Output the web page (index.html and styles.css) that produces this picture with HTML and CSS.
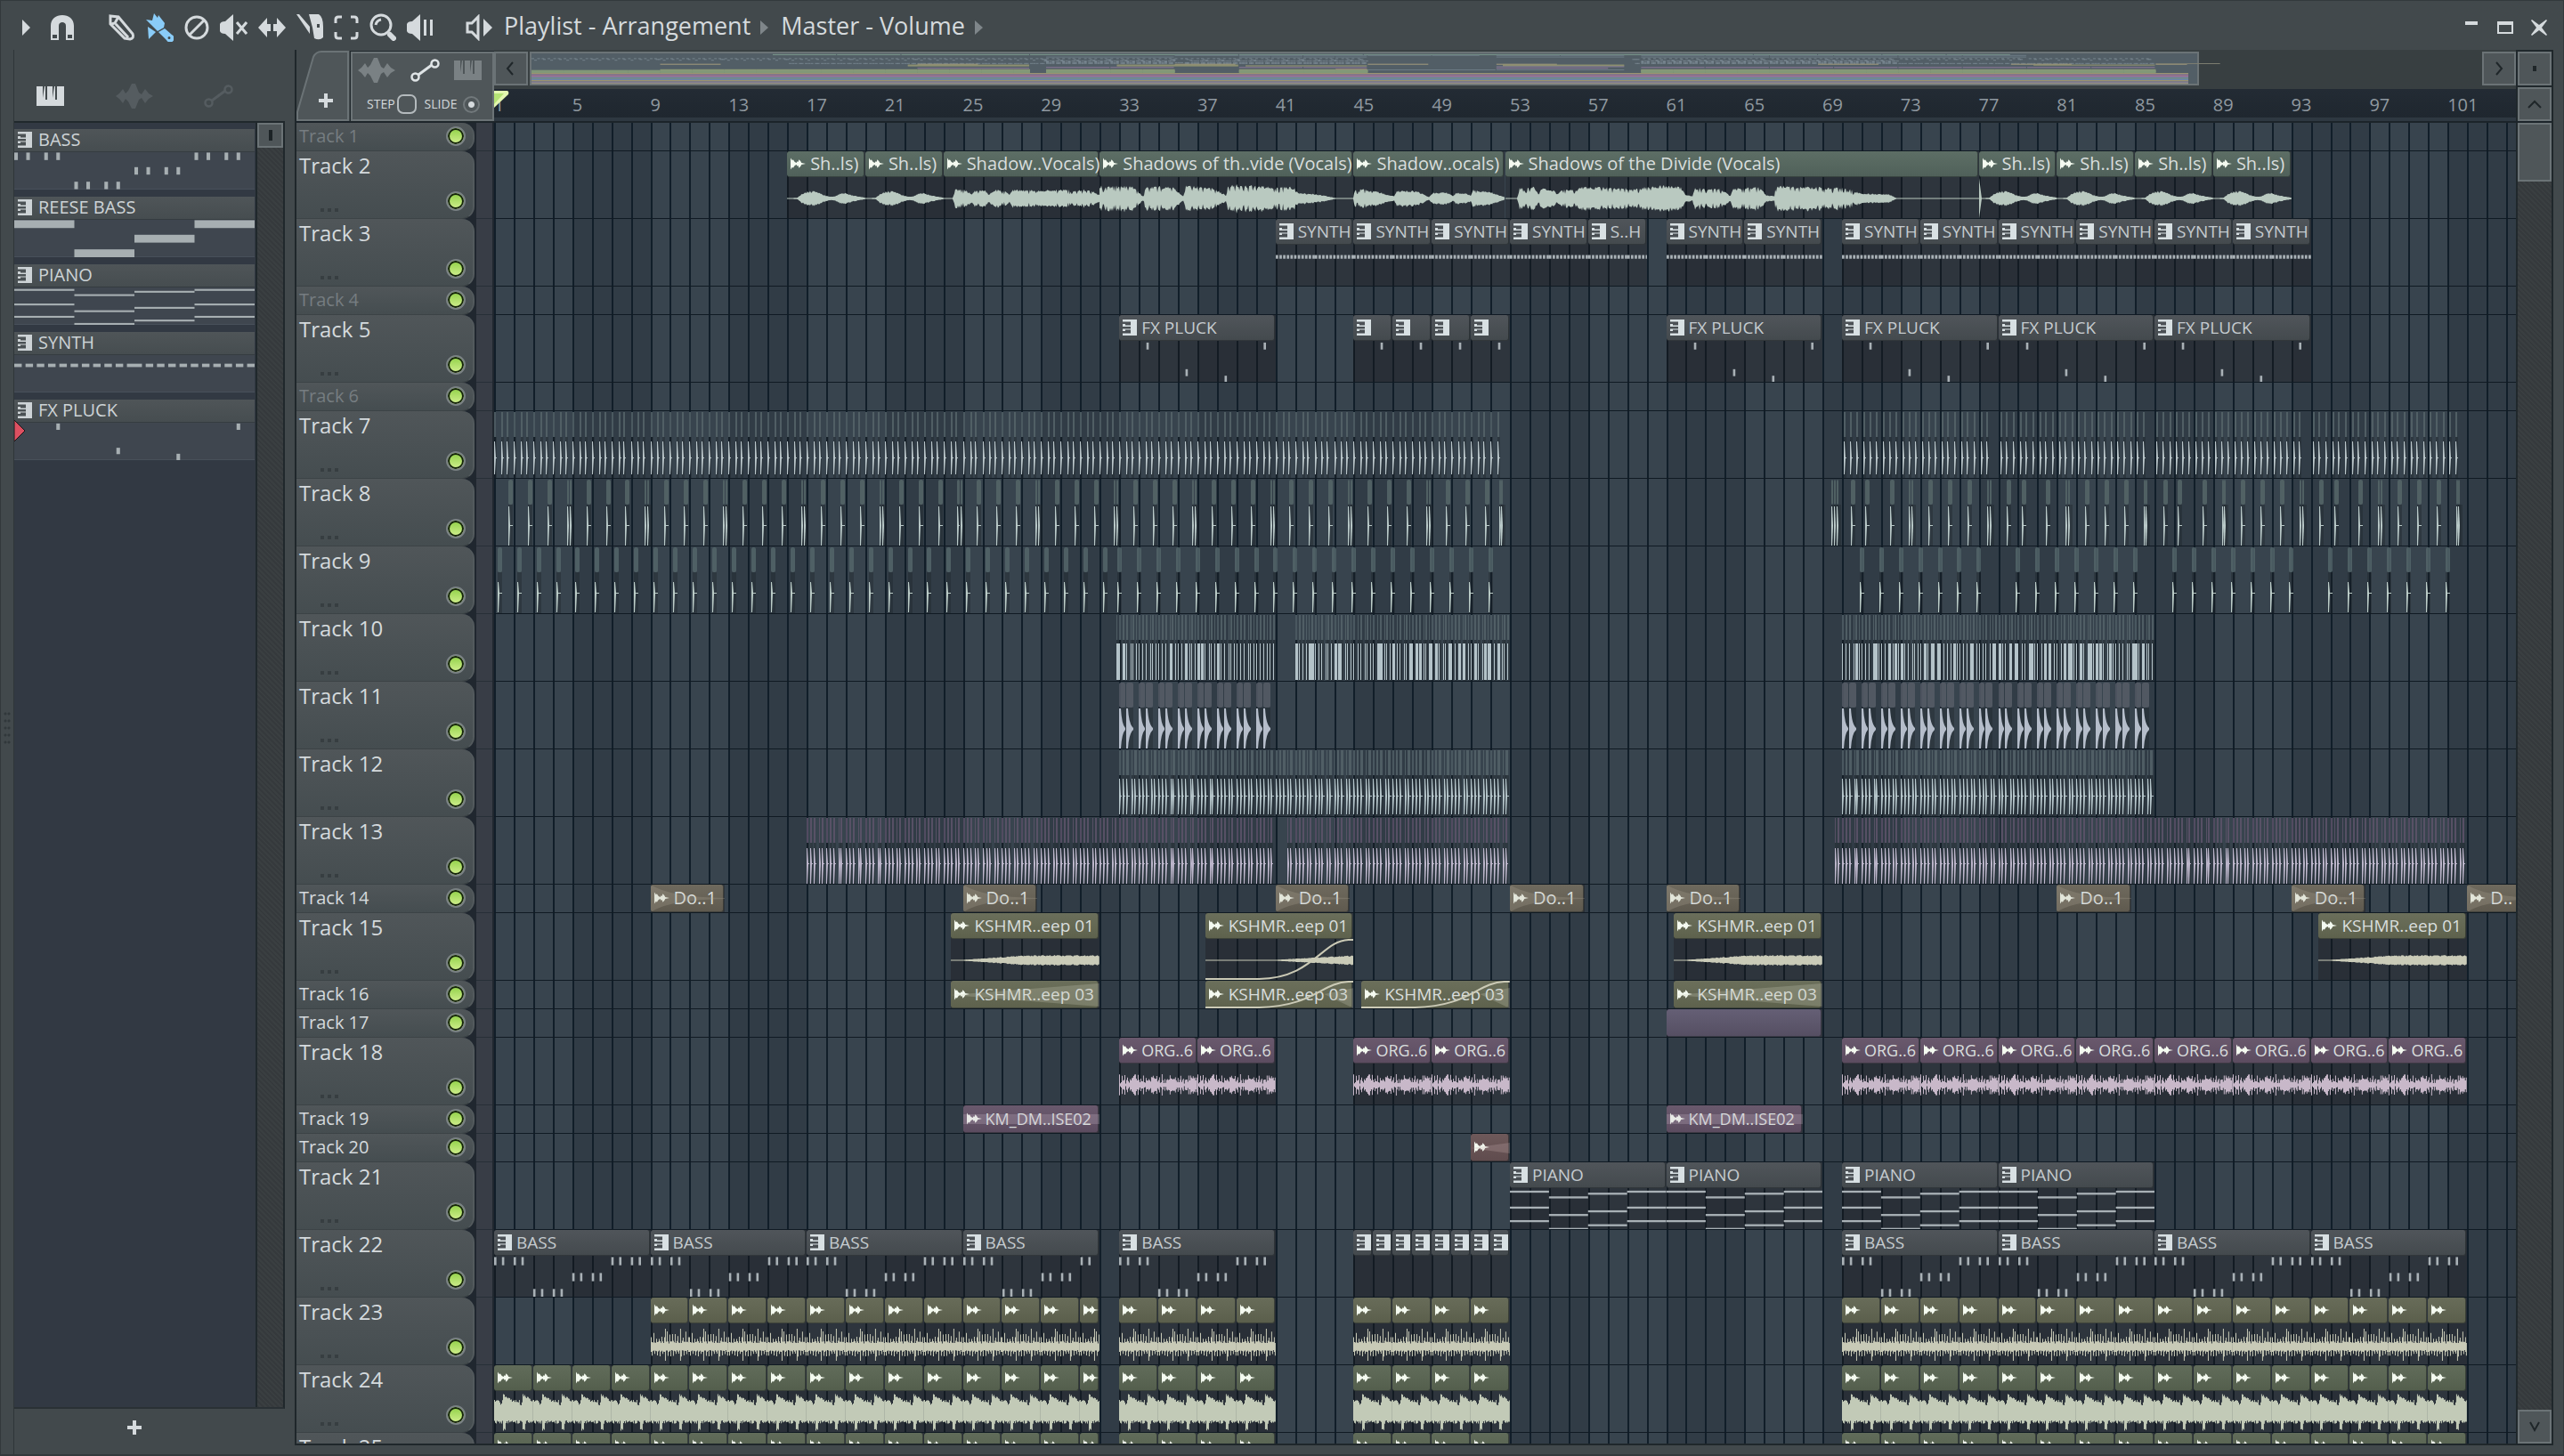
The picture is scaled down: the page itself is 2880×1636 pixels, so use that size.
FILE: index.html
```html
<!DOCTYPE html>
<html lang="en">
  <head>
    <meta charset="UTF-8" />
    <meta name="viewport" content="width=device-width, initial-scale=1.0" />
    <title>Playlist - Arrangement</title>
    <link rel="stylesheet" href="styles.css" />
  </head>
  <body>
    <svg class="symbols" aria-hidden="true">
      <symbol id="keys" viewBox="0 0 16 18">
        <path d="M0 0H16V18H0V15.5H9V11.5H3V13H0V10.5H9V8H0V5H3V6.5H9V2.5H0Z" fill="currentColor" />
      </symbol>
      <symbol id="audio" viewBox="0 0 18 14">
        <path d="M0 0L2 3L3 2L5 5L7 6L8 4L9 5L10 2L12 4L13 6L18 7L13 8L12 10L10 12L9 9L8 10L7 8L5 9L3 12L2 11L0 14Z" fill="currentColor" />
      </symbol>
      <symbol id="piano" viewBox="0 0 31 22">
        <path d="M0 0H7V13L9 0H10V15H12V0H18V13L20 0H21V15H23V0H31V22H0Z" fill="currentColor" />
      </symbol>
      <symbol id="wave" viewBox="0 0 42 28">
        <path d="M0 14L4 11L8 6L11 11L14 8L18 0H22L26 10L29 12L33 6L37 11L42 14L37 17L33 22L29 16L26 18L22 28H18L14 20L11 17L8 22L4 17Z" fill="currentColor" />
      </symbol>
      <symbol id="auto" viewBox="0 0 33 26">
        <path d="M9 18L24 7" stroke="currentColor" stroke-width="3" />
        <circle cx="5.500" cy="20.500" r="4" fill="none" stroke="currentColor" stroke-width="2.500" />
        <circle cx="27.500" cy="5.500" r="4" fill="none" stroke="currentColor" stroke-width="2.500" />
      </symbol>
    </svg>

    <header class="titlebar">
      <nav class="tools">
        <button class="tool menu" aria-label="Menu"><svg width="9" height="18"><path d="M0 0L9 9L0 18Z" /></svg></button>
        <button class="tool snap" aria-label="Snap"><svg width="28" height="28"><path d="M1 28V12C1 4 7 0 14 0S27 4 27 12V28H18V12C18 9 16 8 14 8S10 9 10 12V28ZM3 22V26H8V22ZM20 22V26H25V22Z" fill-rule="evenodd" /></svg></button>
        <button class="tool" aria-label="Draw"><svg width="30" height="30" viewBox="0 0 30 30" class="line"><path d="M2 2L11 3L27 22Q29 27 24 28L18 27L2 11Z" /><path d="M3 11L7 10L11 3M8 11L22 26" /></svg></button>
        <button class="tool on" aria-label="Paint"><svg width="31" height="32" viewBox="0 0 31 32"><path d="M9 0L13 5L14 2L21 11L20 16L13 20L6 13L0 7L7 8Z" /><path d="M14 21L21 17L29 24A4.500 4.500 0 1 1 23 30ZM26 26A1.500 1.500 0 1 0 26 29A1.500 1.500 0 1 0 26 26Z" fill-rule="evenodd" /><path d="M2 15L11 21L3 29Z" /></svg></button>
        <button class="tool" aria-label="Delete"><svg width="28" height="28" viewBox="0 0 28 28" class="line"><circle cx="14" cy="14" r="12" /><path d="M6 22L22 6" /></svg></button>
        <button class="tool" aria-label="Mute"><svg width="31" height="30" viewBox="0 0 31 30"><path d="M0 11Q1 8 6 8L15 0V30L6 22Q1 22 0 19Z" /><path d="M19 9L30 22M30 9L19 22" class="stroke" /></svg></button>
        <button class="tool" aria-label="Slip"><svg width="31" height="24" viewBox="0 0 31 24"><path d="M0 12L10 1V8H14V16H10V23ZM31 12L21 1V8H17V16H21V23Z" /></svg></button>
        <button class="tool" aria-label="Slice"><svg width="30" height="29" viewBox="0 0 30 29"><path d="M0 0H3L15 14V22Z" /><path d="M14 0H25Q30 3 30 14V26Q26 30 20 27L18 15ZM23 11V15H26V11Z" fill-rule="evenodd" /></svg></button>
        <button class="tool" aria-label="Select"><svg width="28" height="28" viewBox="0 0 28 28" class="line"><path d="M2 9V5Q2 2 5 2H9M19 2H23Q26 2 26 5V9M26 19V23Q26 26 23 26H19M9 26H5Q2 26 2 23V19" /></svg></button>
        <button class="tool" aria-label="Zoom"><svg width="30" height="31" viewBox="0 0 30 31" class="line"><circle cx="13" cy="13" r="11" /><path d="M7 13Q8 8 13 7" /><path d="M23 24L27 28" class="thick" /></svg></button>
        <button class="tool" aria-label="Preview"><svg width="30" height="30" viewBox="0 0 30 30"><path d="M0 11Q1 8 6 8L15 0V30L6 22Q1 22 0 19Z" /><path d="M19 6H22V24H19ZM26 6H29V24H26Z" /></svg></button>
        <button class="tool scrub" aria-label="Playback"><svg width="30" height="30" viewBox="0 0 30 30"><path d="M2 10H7L14 3V27L7 20H2Z" class="stroke" /><path d="M20 5L30 15L20 25Z" /></svg></button>
      </nav>
      <h1 class="crumb">Playlist - Arrangement</h1>
      <svg class="sep" width="9" height="16"><path d="M0 0L9 8L0 16Z" /></svg>
      <h2 class="crumb">Master - Volume</h2>
      <svg class="sep" width="9" height="16"><path d="M0 0L9 8L0 16Z" /></svg>
      <div class="window-buttons">
        <button aria-label="Minimize"><svg width="20" height="20"><path d="M3 3H17V7H3Z" /></svg></button>
        <button aria-label="Maximize"><svg width="20" height="20"><path d="M1 3H19V17H1ZM3 7V15H17V7Z" fill-rule="evenodd" /></svg></button>
        <button aria-label="Close"><svg width="20" height="20"><path d="M2 1L10 7L18 1L19 2L13 10L19 18L18 19L10 13L2 19L1 18L7 10L1 2Z" /></svg></button>
      </div>
    </header>

    <main class="workspace">
      <div class="edge"><div class="grip"></div></div>
      <aside class="picker">
        <div class="picker-tabs">
          <button class="active" aria-label="Patterns"><svg width="31" height="22"><use href="#piano" /></svg></button>
          <button aria-label="Audio"><svg width="42" height="28"><use href="#wave" /></svg></button>
          <button aria-label="Automation"><svg width="33" height="26"><use href="#auto" /></svg></button>
        </div>
        <div class="picker-body">
          <div class="patterns" id="patterns"></div>
          <div class="picker-scroll"><button class="thumb" aria-label="Scroll"></button></div>
        </div>
        <button class="add-pattern" aria-label="Add pattern"><svg width="16" height="16"><path d="M6 0H10V6H16V10H10V16H6V10H0V6H6Z" /></svg></button>
      </aside>

      <section class="playlist">
        <div class="top">
          <div class="corner">
            <button class="add-track" aria-label="Add track">
              <svg width="59" height="80"><path class="tab" d="M1 79L1 70L19 8Q22 2 28 2H58V79Z" /><path class="plus" d="M31 49H35V55H41V59H35V65H31V59H25V55H31Z" /></svg>
            </button>
            <div class="options">
              <div class="modes">
                <button aria-label="Audio clips"><svg width="42" height="28"><use href="#wave" /></svg></button>
                <button class="active" aria-label="Automation clips"><svg width="33" height="26"><use href="#auto" /></svg></button>
                <button aria-label="Pattern clips"><svg width="31" height="22"><use href="#piano" /></svg></button>
              </div>
              <div class="switches">
                <label for="step">STEP</label><input type="checkbox" id="step" />
                <label for="slide">SLIDE</label><input type="radio" id="slide" checked />
              </div>
            </div>
          </div>
          <div class="time">
            <div class="map-row">
              <button class="box" aria-label="Scroll left"><svg width="12" height="18"><path d="M8 2L2 9L8 16" /></svg></button>
              <div class="map"><svg id="map"></svg></div>
              <button class="box" aria-label="Scroll right"><svg width="12" height="18"><path d="M3 2L9 9L3 16" /></svg></button>
            </div>
            <div class="ruler" id="ruler">
              <svg class="playhead" width="17" height="20"><path d="M0 0H15Q17 1 16 4L0 19Z" /><path d="M0 3H11L0 15Z" class="inner" /></svg>
            </div>
          </div>
          <div class="stack">
            <button class="box" aria-label="Options"><svg width="4" height="6"><path d="M2 0V6" class="dot" /></svg></button>
            <button class="box" aria-label="Scroll up"><svg width="18" height="12"><path d="M2 10L9 3L16 10" /></svg></button>
          </div>
        </div>
        <div class="bottom">
          <div class="tracks" id="tracks"><svg class="grid" id="grid"></svg></div>
          <div class="scroll">
            <button class="box thumb" aria-label="Scroll position"></button>
            <button class="box down" aria-label="Scroll down"><svg width="18" height="14"><path d="M4 2L9 11L14 2" /></svg></button>
          </div>
        </div>
      </section>
    </main>
    <script src="playlist.js"></script>
  </body>
</html>
```
FILE: styles.css
```css
* {
  margin: 0;
  padding: 0;
  box-sizing: border-box;
}

body {
  height: 100vh;
  overflow: hidden;
  display: flex;
  flex-direction: column;
  background: #42494c;
  border: 1px solid #33393c;
  border-bottom-width: 2px;
  color: #d5dadd;
  font-family: 'Open Sans', 'Noto Sans', sans-serif;
}

button {
  border: 0;
  background: none;
  color: inherit;
  font: inherit;
  cursor: pointer;
}

svg {
  display: block;
  fill: currentColor;
}

.symbols {
  position: absolute;
  width: 0;
  height: 0;
}

/* title bar */
.titlebar {
  flex: none;
  height: 55px;
  display: flex;
  align-items: center;
  padding: 4px 17px 0 24px;
}

.tools {
  display: flex;
  align-items: center;
  gap: 12px;
}

.tool .line,
.tool .stroke {
  fill: none;
  stroke: currentColor;
  stroke-width: 3;
}

.tool .thick {
  stroke-width: 6;
  stroke-linecap: round;
}

.tool.menu {
  margin-right: 10px;
}

.tool.snap {
  margin-right: 26px;
}

.tool.on {
  color: #8accf8;
}

.tool.scrub {
  margin: 0 13px 0 24px;
}

.crumb {
  font-size: 27px;
  font-weight: 400;
  line-height: 32px;
  padding-bottom: 4px;
  white-space: nowrap;
}

.sep {
  margin: 0 14px 0 11px;
  color: #7f868a;
}

.window-buttons {
  margin-left: auto;
  display: flex;
  gap: 18px;
}

/* main areas */
.workspace {
  flex: 1;
  min-height: 0;
  display: flex;
  padding-right: 11px;
}

.edge {
  flex: none;
  width: 15px;
  display: flex;
  align-items: center;
  justify-content: center;
  border-right: 1px solid #2f3639;
}

.grip {
  width: 8px;
  height: 40px;
  margin-bottom: 54px;
  background: radial-gradient(circle, #31383b 1px, transparent 2px) 0 0 / 4px 8px;
}

.picker {
  flex: none;
  width: 304px;
  display: flex;
  flex-direction: column;
}

.picker-tabs {
  height: 80px;
  display: flex;
  align-items: center;
  justify-content: space-between;
  padding: 24px 58px 0 25px;
  color: #555c60;
}

.picker-tabs .active {
  color: #d5dadd;
}

.picker-body {
  flex: 1;
  min-height: 0;
  display: flex;
  border-top: 2px solid #20282c;
  border-right: 2px solid #20282c;
  border-bottom: 2px solid #2a3135;
}

.patterns {
  flex: 1;
  background: #323943;
  padding-top: 7px;
}

.pattern {
  height: 68px;
  margin: 0 1px 8px 0;
}

.pattern-name {
  height: 26px;
  display: flex;
  align-items: center;
  gap: 7px;
  padding: 0 0 2px 4px;
  background: linear-gradient(#4f5558, #464d50);
  border-bottom: 1px solid #353c40;
  font-size: 20px;
  line-height: 22px;
  color: #cdd3d6;
}

.pattern-notes {
  height: 42px;
  background: #3f464f;
  border-bottom: 1px solid #48505a;
}

.pattern-notes svg {
  width: 100%;
  height: 42px;
  fill: #a7afb2;
}

.pattern.current {
  position: relative;
}

.marker {
  position: absolute;
  left: 0;
  top: 22px;
  fill: #dd5061;
  stroke: #1c1416;
}

.picker-scroll {
  width: 31px;
  border-left: 2px solid #20282c;
  background: repeating-linear-gradient(45deg, #35393c 0 2px, #3a3f41 2px 4px);
}

.picker-scroll .thumb {
  display: block;
  width: 29px;
  height: 28px;
  border: 2px solid #6b7376;
  background: linear-gradient(#1c2326, #1c2326) center / 4px 12px no-repeat #4f5659;
}

.add-pattern {
  height: 51px;
  padding: 0 145px 9px 127px;
}

/* playlist */
.playlist {
  flex: 1;
  min-width: 0;
  margin: 0 0 10px 11px;
  border: 2px solid #1f272b;
  border-top: 0;
  display: flex;
  flex-direction: column;
}

.top {
  flex: none;
  height: 82px;
  display: flex;
  border-bottom: 2px solid #1c242a;
}

.corner {
  flex: none;
  width: 222px;
  display: flex;
  gap: 2px;
  background: #42494c;
}

.corner .tab {
  fill: #4f5659;
  stroke: #6b7376;
  stroke-width: 2;
}

.options {
  flex: 1;
  margin-top: 2px;
  border: 2px solid #6b7376;
  outline: 1px solid #20282c;
  background: #4f5659;
}

.modes {
  height: 38px;
  display: flex;
  align-items: center;
  justify-content: space-between;
  padding: 0 12px 0 6px;
  color: #7a8184;
}

.modes .active {
  color: #dfe4e6;
}

.switches {
  height: 38px;
  display: flex;
  align-items: center;
  padding: 0 10px 0 16px;
  font-size: 14px;
  line-height: 20px;
}

.switches input {
  appearance: none;
  flex: none;
  width: 22px;
  height: 22px;
  margin: 0 9px 0 2px;
  border: 2px solid #b4babd;
  border-radius: 7px;
}

.switches input[type='radio'] {
  width: 19px;
  height: 19px;
  margin: 0 0 0 7px;
  border-color: #71787b;
  border-radius: 50%;
  background: radial-gradient(circle, #d5dadd 3px, transparent 4px);
}

.time {
  flex: 1;
  min-width: 0;
}

.map-row {
  height: 44px;
  display: flex;
  padding: 2px 0 4px;
  background: #383f41;
}

.box {
  flex: none;
  width: 38px;
  height: 38px;
  display: flex;
  align-items: center;
  justify-content: center;
  border: 2px solid #6b7376;
  background: #4f5659;
}

.box path {
  fill: none;
  stroke: #1f2629;
  stroke-width: 2;
}

.box .dot {
  stroke-width: 4;
}

.map {
  flex: 1;
  min-width: 0;
  margin: 0 2px;
}

.map svg {
  width: 100%;
  height: 38px;
}

.ruler {
  position: relative;
  height: 36px;
  display: flex;
  overflow: hidden;
  border-bottom: 4px solid #2e3841;
  background: linear-gradient(#232b34, #1f272f);
  font-size: 20px;
  line-height: 36px;
  color: #9099a0;
}

.ruler span {
  flex: none;
  width: calc(400% / 103.5);
}

.playhead {
  position: absolute;
  left: 0;
  top: 2px;
  fill: #e3f7b0;
}

.playhead .inner {
  fill: #b5e375;
}

.stack {
  flex: none;
  width: 40px;
  display: flex;
  flex-direction: column;
  gap: 2px;
  padding-top: 2px;
  border-left: 2px solid #20282c;
  background: #20282c;
}

.bottom {
  flex: 1;
  min-height: 0;
  display: flex;
}

.tracks {
  position: relative;
  flex: 1;
  min-width: 0;
  overflow: hidden;
  background: #20272f;
}

.grid {
  position: absolute;
  left: 222px;
  top: 0;
  width: calc(100% - 222px);
  height: 100%;
}

.track {
  height: 76px;
  display: flex;
}

.track.short {
  height: 32px;
}

.head {
  flex: none;
  width: 200px;
  display: flex;
  justify-content: space-between;
  padding-left: 3px;
  border-radius: 0 14px 14px 0;
  border-right: 2px solid #535a5d;
  border-bottom: 1px solid #3c4346;
  background: linear-gradient(#505659, #454d50);
}

.name {
  font-size: 24px;
  font-weight: 400;
  line-height: 32px;
}

.short .name {
  font-size: 20px;
  line-height: 30px;
}

.empty .name {
  color: #767d81;
}

.more {
  width: 20px;
  height: 4px;
  margin: 32px 0 0 24px;
  background: repeating-linear-gradient(90deg, #373e41 0 4px, transparent 4px 8px);
}

.short .more {
  display: none;
}

.led {
  align-self: flex-end;
  width: 22px;
  height: 22px;
  margin: 0 8px 8px 0;
  border: 2px solid #7a8184;
  border-radius: 50%;
  background: linear-gradient(#8fd046, #d3f090);
  box-shadow: inset 0 0 0 2px #16240c;
}

.short .led {
  margin-bottom: 5px;
}

.gutter {
  flex: none;
  width: 18px;
  margin: 0 2px;
  background: #383d46;
  border-bottom: 1px solid #272f37;
}

.lane {
  position: relative;
  flex: 1;
  min-width: 0;
  overflow: hidden;
  border-bottom: 1px solid #101a23;
}

.hits {
  position: absolute;
  left: 0;
  top: 0;
  width: 100%;
  height: 76px;
}

.clip {
  --top: #50555a;
  --low: #444a4e;
  --ink: #a9b1b6;
  position: absolute;
  top: 0;
  height: 100%;
  background: rgba(26, 22, 26, 0.32);
  overflow: hidden;
}

.clip-name {
  position: relative;
  height: 29px;
  display: flex;
  align-items: center;
  gap: 5px;
  margin-right: 1px;
  padding-left: 4px;
  border-radius: 3px;
  border: 1px solid rgba(20, 26, 28, 0.5);
  border-width: 0 1px 1px 0;
  background: linear-gradient(var(--top), var(--low));
  color: #d9dedd;
  font-size: 20px;
  line-height: 28px;
  white-space: nowrap;
}

.clip-name svg {
  flex: none;
  color: #f4faf0;
}

.clip.pattern-clip .clip-name svg {
  color: #d8e0e3;
}

.clip.pattern-clip .clip-name {
  color: #c5cbcf;
  font-size: 19px;
}

.clip.sweep .clip-name {
  font-size: 19px;
}

.clip.organ .clip-name {
  font-size: 18px;
  gap: 4px;
}

.short .clip-name {
  height: 31px;
}

.clip-body {
  position: absolute;
  left: 0;
  top: 30px;
  width: 100%;
  height: 46px;
  fill: var(--ink);
}

.short .clip-body {
  top: 0;
  height: 31px;
  opacity: 0.25;
}

.curve {
  position: absolute;
  left: 0;
  bottom: 0;
  width: 100%;
  fill: none;
  stroke: #cbcab6;
  stroke-width: 2;
}

.vocals { --top: #5d6e65; --low: #50615a; --ink: #b9c9c0; }
.crash { --top: #6f6a5e; --low: #5f5a4f; --ink: #b0a898; }
.sweep { --top: #6b6f5b; --low: #5e624d; --ink: #cacbb8; }
.block { --top: #655f75; --low: #564f63; --ink: #c8b8c9; }
.organ { --top: #6a596d; --low: #5c4c60; --ink: #c8b8c9; }
.impact { --top: #6e595a; --low: #604c4e; --ink: #c9b0b0; }
.gold { --top: #686c59; --low: #5b5f4c; --ink: #c8cab7; }
.green { --top: #616c5a; --low: #545f4d; --ink: #c2cab7; }

.scroll {
  flex: none;
  width: 40px;
  display: flex;
  flex-direction: column;
  justify-content: space-between;
  border-left: 2px solid #20282c;
  background: repeating-linear-gradient(45deg, #35393c 0 2px, #3a3f41 2px 4px);
}

.scroll .thumb {
  height: 66px;
}
```
FILE: playlist.js
```javascript
const BARS = 103.5;
const tracksEl = document.querySelector('#tracks');
const grid = document.querySelector('#grid');
const ruler = document.querySelector('#ruler');
const patterns = document.querySelector('#patterns');

// notes as [start bar, top %, length, height %] in a pattern of the given length
const quad = (bar, y) => [0, 0.4, 1, 1.4].map((o) => [bar + o, y, 0.12, 20]);
const steps = (rows, h) => rows.flatMap((r, i) => r.map((y) => [i * 2, y, 2, h]));
const dashes = [];
for (let half = 0; half < 2; half++) {
  for (let i = 0; i < 11; i++) {
    dashes.push([half * 2 + i * 0.1875, 23, Math.min(0.125, 2 - i * 0.1875), 9]);
  }
}
const notes = {
  BASS: { length: 8, list: [...quad(0, 1), ...quad(2, 79), ...quad(4, 40), ...quad(6, 1)] },
  'REESE BASS': { length: 8, list: steps([[1], [79], [40], [1]], 21) },
  PIANO: { length: 8, list: steps([[4, 43, 76], [18, 61, 95], [9, 52, 86], [4, 43, 76]], 5) },
  SYNTH: { length: 4, list: dashes },
  'FX PLUCK': { length: 8, list: [[1.4, 2, 0.12, 17], [3.4, 67, 0.12, 17], [5.4, 83, 0.12, 17], [7.4, 2, 0.12, 17]] },
};

// half heights of the vocal takes, as [position, height]
const phrase = [[0, 0], [0.13, 0.3], [0.2, 5], [0.28, 8], [0.38, 7], [0.48, 3], [0.56, 1.5], [0.62, 2], [0.66, 4], [0.72, 6], [0.8, 4], [0.9, 2], [1, 0.5]];
const takes = {
  16: phrase,
  20: phrase,
  24: [[0, 0], [0.06, 0], [0.07, 10], [0.14, 9], [0.18, 4], [0.2, 8], [0.26, 9], [0.29, 4], [0.33, 9], [0.39, 8], [0.42, 4], [0.44, 9], [0.94, 9], [1, 3]],
  32: [[0, 13], [0.13, 13], [0.17, 2], [0.175, 2], [0.18, 13], [0.29, 12], [0.33, 2], [0.34, 13], [0.44, 12], [0.5, 3], [0.505, 15], [0.7, 12], [0.77, 12], [0.78, 6], [0.86, 4], [0.93, 0], [1, 0]],
  45: [[0, 0], [0.01, 10], [0.12, 9], [0.22, 4], [0.27, 2], [0.29, 8], [0.42, 8], [0.5, 1], [0.53, 6], [0.62, 6], [0.66, 2], [0.68, 6], [0.74, 5], [0.78, 3], [0.79, 9], [0.9, 7], [1, 1]],
  52.75: [[0, 0], [0.025, 0], [0.03, 11], [0.06, 12], [0.07, 4], [0.075, 11], [0.1, 9], [0.11, 4], [0.12, 10], [0.15, 9], [0.16, 12], [0.29, 11], [0.3, 14], [0.37, 12], [0.38, 4], [0.395, 2], [0.4, 11], [0.455, 10], [0.475, 2], [0.48, 11], [0.54, 12], [0.55, 3], [0.568, 2], [0.57, 13], [0.72, 11], [0.75, 5], [0.81, 4], [0.825, 0], [1, 0]],
  77: phrase,
  81: phrase,
  85: phrase,
  89: phrase,
};

const run = (from, to, step, name) => {
  const list = [];
  for (let b = from; b < to; b += step) list.push([b, Math.min(b + step, to), name]);
  return list;
};
const beats = (offsets, ...ranges) =>
  ranges.flatMap(([from, to]) => {
    const list = [];
    for (let b = Math.floor(from); b < to; b++) {
      offsets.forEach((o) => { if (b + o >= from && b + o < to) list.push(b + o); });
    }
    return list;
  });
const phrases = (fn) => [70, 78, 86, 94].flatMap(fn);
const kick = (a, b) => {
  const list = [];
  for (let n = a; n < b; n++) {
    list.push(n + 0.72);
    if ((n - a) % 4 === 3) list.push(n + 0.86);
  }
  return list;
};
const loops = (from) => [...run(from, 32, 2), ...run(33, 41, 2), ...run(45, 53, 2), ...run(70, 102, 2)];
const five = [0, 0.18, 0.36, 0.62, 0.75];

const tracks = [
  { short: true },
  { kind: 'vocals', clips: [[16, 20, 'Sh..ls)'], [20, 24, 'Sh..ls)'], [24, 32, 'Shadow..Vocals)'], [32, 45, 'Shadows of th..vide (Vocals)'], [45, 52.75, 'Shadow..ocals)'], [52.75, 77, 'Shadows of the Divide (Vocals)'], ...run(77, 93, 4, 'Sh..ls)')] },
  { pattern: 'SYNTH', clips: [...run(41, 57, 4, 'SYNTH'), [57, 60, 'S..H'], ...run(61, 69, 4, 'SYNTH'), ...run(70, 94, 4, 'SYNTH')] },
  { short: true },
  { pattern: 'FX PLUCK', clips: [[33, 41, 'FX PLUCK'], ...run(45, 53, 2), [61, 69, 'FX PLUCK'], ...run(70, 94, 8, 'FX PLUCK')] },
  { short: true },
  { hits: [...beats([0, 0.36, 0.63], [1, 41], [41, 52.5]), ...phrases((p) => beats([0.1, 0.4, 0.75], [p, p + 7.45]))], w: 3, tip: 34, low: 71, wave: '#b9c5c9', strip: '#56646a' },
  { hits: [...kick(1, 33), ...kick(33, 41), ...kick(41, 52), 52.44, 52.56, 69.45, 69.59, 69.73, ...phrases((p) => [0.44, 1.2, 2.44, 3.44, 3.56, 4.44, 5.44, 6.44, 7.44, 7.56].map((o) => p + o))], w: 5, tip: 31, low: 75, wave: '#b9c9c8', strip: '#566668' },
  { hits: [...beats([0.17], [1, 33]), ...beats([0.9], [32, 52]), ...phrases((p) => beats([0.9], [p, p + 7]))], w: 5, tip: 40, low: 74, wave: '#bccdc8', strip: '#54656a' },
  { hits: beats([0, 0.19, 0.36, 0.58, 0.68, 0.86], [32.7, 41], [42, 53], [70, 86]), w: 3, tip: 33, low: 74, wave: '#b4c3c9', strip: '#55636a', solid: true },
  { hits: beats([0, 0.36], [33, 41], [70, 86]), w: 8, tip: 30, low: 75, wave: '#b5bdca', strip: '#575d67', fat: true },
  { hits: beats(five, [33, 53], [70, 86]), w: 4, tip: 33, low: 73, wave: '#b6c6cb', strip: '#55636a' },
  { hits: beats(five, [17, 41], [41.6, 53], [69.45, 102]), w: 3, tip: 35, low: 75, wave: '#bdb6cb', strip: '#5e536b' },
  { short: true, kind: 'crash', clips: [9, 25, 41, 53, 61, 81, 93].map((b) => [b, b + 3.82, 'Do..1']).concat([[102, 105.8, 'D..']]) },
  { kind: 'sweep', clips: [[24.4, 32, 'KSHMR..eep 01'], [37.4, 45, 'KSHMR..eep 01', 'curve'], [61.4, 69, 'KSHMR..eep 01'], [94.4, 102, 'KSHMR..eep 01']] },
  { short: true, kind: 'sweep', clips: [[24.4, 32, 'KSHMR..eep 03'], [37.4, 45, 'KSHMR..eep 03', 'curve'], [45.4, 53, 'KSHMR..eep 03', 'curve'], [61.4, 69, 'KSHMR..eep 03']] },
  { short: true, kind: 'block', clips: [[61, 69]] },
  { kind: 'organ', clips: [...run(33, 41, 4, 'ORG..6'), ...run(45, 53, 4, 'ORG..6'), ...run(70, 102, 4, 'ORG..6')] },
  { short: true, kind: 'organ', clips: [[25, 32, 'KM_DM..ISE02'], [61, 68, 'KM_DM..ISE02']] },
  { short: true, kind: 'impact', clips: [[51, 53, '']] },
  { pattern: 'PIANO', clips: [[53, 61, 'PIANO'], [61, 69, 'PIANO'], [70, 78, 'PIANO'], [78, 86, 'PIANO']] },
  { pattern: 'BASS', clips: [...run(1, 32, 8, 'BASS'), [33, 41, 'BASS'], ...run(45, 53, 1), ...run(70, 102, 8, 'BASS')] },
  { kind: 'gold', clips: loops(9) },
  { kind: 'green', clips: loops(1) },
  { kind: 'green', clips: loops(1) },
];

let seed = 7;
const rand = () => {
  seed = (seed * 16807) % 2147483647;
  return seed / 2147483647;
};

const level = (points, t) => {
  for (let i = 1; i < points.length; i++) {
    const [t0, a0] = points[i - 1];
    const [t1, a1] = points[i];
    if (t <= t1) return a0 + ((a1 - a0) * (t - t0)) / (t1 - t0 || 1);
  }
  return 0;
};

const noteRects = (pattern, from, to) =>
  notes[pattern].list
    .filter(([b]) => b >= from && b < to)
    .map(([b, y, w, h]) => `<rect x="${b}" y="${y}" width="${w}" height="${h}"/>`)
    .join('');

// outline with an upper and a lower half height for each pixel column
const outline = (width, mid, heights) => {
  let up = `M0 ${mid}`;
  let down = '';
  for (let x = 0; x <= width; x++) {
    const [a, b] = heights(x);
    up += `L${x} ${(mid - a - 0.5).toFixed(1)}`;
    down = `L${x} ${(mid + b + 0.5).toFixed(1)}${down}`;
  }
  return `<path d="${up}${down}Z"/>`;
};

// one separate stroke for each pixel column, for sharp transients
const columns = (width, mid, heights) => {
  let d = '';
  for (let x = 0; x < width; x++) {
    const [a, b] = heights(x);
    d += `M${x} ${(mid - a).toFixed(1)}h1V${(mid + b).toFixed(1)}h-1Z`;
  }
  return `<path d="${d}"/>`;
};

const waveform = (track, clip, width) => {
  const [start, , , curve] = clip;
  seed = track.kind.length * 131 + 7;
  for (let i = 0; i < 5; i++) rand();
  if (track.kind === 'vocals') {
    const edge = start === 77 ? '<path d="M0 0L3 23L0 46Z"/>' : '';
    return edge + outline(width, 23, (x) => {
      const full = level(takes[start], x / width);
      const dip = full > 8 && rand() < 0.12 ? 0.6 : 1;
      const a = full * dip * (0.78 + rand() * 0.3);
      return [a, a * (0.9 + rand() * 0.2)];
    });
  }
  if (track.kind === 'crash') return `<path d="M0 0Q20 14 ${width} 15V16Q20 17 0 31Z"/>`;
  if (track.kind === 'impact') return `<path d="M0 16L${width} 10V22Z"/>`;
  if (track.kind === 'block') return '';
  if (track.kind === 'sweep' && track.short) return curve ? `<path d="M${width * 0.8} 15L${width} 31V8Z"/>` : `<path d="M0 16L${width} 3V29Z"/>`;
  if (track.kind === 'sweep') {
    const from = curve ? 0.47 : 0.08;
    return outline(width, 23, (x) => {
      const t = Math.max(0, (x / width - from) / (curve ? 0.53 : 0.42));
      const a = Math.min(1, t) * 4.5 * (0.85 + rand() * 0.35);
      return [a, a];
    });
  }
  if (track.kind === 'organ' && track.short) return `<rect y="10" width="${width}" height="11"/>`;
  if (track.kind === 'organ') {
    return columns(width, 23, (x) => {
      const burst = x % 22 > 13 && x % 22 < 20;
      const a = burst || x % 3 === 0 ? 6 + rand() * 6 : 1 + rand() * 5;
      return [a, a];
    });
  }
  if (track.kind === 'gold') {
    return columns(width, 25, (x) => {
      const peak = x % 44 === 16 || x % 44 === 33;
      const up = peak ? 20 : x % 3 === 0 ? 8 + rand() * 9 : 3.5 + rand() * 3;
      const down = peak ? 16 : x % 3 === 1 ? 6 + rand() * 6 : 4 + rand() * 2;
      return [up, down];
    });
  }
  return columns(width, 22, (x) => {
    const beat = (x + 12) % 22;
    const swell = Math.max(0, 1 - beat / 11);
    const up = 10 + swell * 7 + rand() * 3 - (x % 22 > 6 && x % 22 < 9 ? 3 : 0);
    const deep = (x + 12) % 22 < 3 ? 8 : 0;
    return [up, 10 + deep + rand() * 4];
  });
};

const addClip = (lane, track, clip, barWidth) => {
  const [start, end, name, curve] = clip;
  const el = document.createElement('div');
  el.className = track.pattern ? 'clip pattern-clip' : `clip ${track.kind}`;
  el.style.left = `${((start - 1) / BARS) * 100}%`;
  el.style.width = `${((end - start) / BARS) * 100}%`;
  const h = track.short ? 31 : 46;
  const icon = track.pattern
    ? '<svg width="16" height="18"><use href="#keys"/></svg>'
    : '<svg width="17" height="14"><use href="#audio"/></svg>';
  const width = Math.round((end - start) * barWidth);
  let body;
  if (track.pattern) {
    const view = `0 0 ${end - start} 100`;
    body = track.pattern === 'BASS' && end - start === 1
      ? '' : noteRects(track.pattern, 0, end - start);
    body = `<svg class="clip-body" viewBox="${view}" preserveAspectRatio="none">${body}</svg>`;
  } else {
    body = `<svg class="clip-body" viewBox="0 0 ${width} ${h}" preserveAspectRatio="none">${waveform(track, clip, width)}</svg>`;
  }
  if (curve) {
    body += `<svg class="curve" height="${h}" viewBox="0 0 166 ${h}" preserveAspectRatio="none"><path d="M0 ${h - 1}H60C120 ${h - 2} 130 2 160 1H166"/></svg>`;
  }
  el.innerHTML = `<div class="clip-name">${track.kind === 'block' ? '' : icon}<span>${name || ''}</span></div>${body}`;
  lane.appendChild(el);
};

const drawHits = (track, bar) => {
  let strips = '';
  let shapes = '';
  const mid = 53;
  seed = 4242;
  track.hits.forEach((b, i) => {
    const x = Math.round((b - 1) * bar);
    const next = track.hits[i + 1];
    const room = next > b ? Math.max(2, Math.round((next - 1) * bar) - x - 1) : track.w;
    const doubled = track.w === 5 && b - track.hits[i - 1] < 0.2;
    const w = doubled ? 2 : Math.min(track.w, room);
    const thin = !track.fat && track.w < 5;
    strips += `<rect x="${x}" y="1" width="${thin ? Math.max(1, w - 1) : w}" height="28" rx="${thin ? 0 : 2}"/>`;
    if (track.solid) {
      const wide = rand() < 0.3 ? 3 : 1;
      shapes += `<rect x="${x}" y="${track.tip}" width="${wide}" height="${track.low - track.tip}"/>`;
    } else if (track.fat) {
      shapes += `<path d="M${x} ${track.tip}H${x + 2}Q${x + 3} ${mid - 5} ${x + w} ${mid - 1}V${mid + 1}Q${x + 3} ${mid + 5} ${x + 2} ${track.low}H${x}Z"/>`;
    } else {
      shapes += `<path d="M${x} ${track.tip}H${x + 1}L${x + 2} ${mid - 1}H${x + w}V${mid}H${x + 2}L${x + 1} ${track.low}H${x}Z"/>`;
    }
  });
  const shade = track.hits.map((b) => `<rect x="${Math.round((b - 1) * bar)}" y="29" width="${track.w}" height="47"/>`).join('');
  return `<g fill="#1d2229" fill-opacity=".35">${shade}</g><g fill="${track.strip}" fill-opacity=".85">${strips}</g><g fill="${track.wave}">${shapes}</g>`;
};

const drawMap = () => {
  const svg = document.querySelector('#map');
  const width = svg.clientWidth;
  const view = Math.round(width * 0.856);
  const bar = view / 103.8;
  const colors = { vocals: '#7c9a8c', crash: '#a39b7d', sweep: '#9b9b73', block: '#857b98', organ: '#8d789a', impact: '#9a7d7d', gold: '#8e9878', green: '#829878' };
  let out = `<rect width="${view}" height="38" fill="#6b7376"/><rect x="2" y="2" width="${view - 4}" height="34" fill="#525e66"/>`;
  tracks.forEach((track, i) => {
    const y = 2 + i * 0.9;
    (track.clips || []).forEach(([a, b]) => {
      const tall = track.kind === 'gold' || track.kind === 'green';
      out += `<rect x="${2 + (a - 1) * bar}" y="${tall ? y - 2 : y}" width="${(Math.min(b, 104) - a) * bar - (tall ? 0 : 1)}" height="${tall ? 3 : 1}" fill="${colors[track.kind] || '#6c7b85'}"/>`;
    });
    (track.hits || []).forEach((b) => {
      out += `<rect x="${2 + (b - 1) * bar}" y="${y}" width="3" height="1" fill="#84939c" fill-opacity=".7"/>`;
    });
  });
  ['#9a9470', '#8f7a9a', '#a0708f', '#7f7fa5', '#7b9a92', '#6c83ab', '#a3986c', '#7f7b9b', '#979184'].forEach((c, i) => {
    out += `<rect x="2" y="${24 + i * 1.35}" width="${view - 14}" height="1.4" fill="${c}"/>`;
  });
  out += `<rect x="${2 + 101 * bar}" y="13" width="${bar * 4}" height="1" fill="#7c7d70"/>`;
  svg.innerHTML = out;
};

const draw = () => {
  const bar = grid.clientWidth / BARS;
  const height = grid.clientHeight;
  let cells = '';
  for (let b = 0; b < BARS; b++) {
    const x = Math.round(b * bar);
    cells += `<rect x="${x}" y="0" width="${Math.ceil(bar) + 1}" height="${height}" fill="${b % 8 < 4 ? '#38444e' : '#313c46'}"/>`;
    cells += `<rect x="${x}" y="0" width="2" height="${height}" fill="#111e29"/>`;
  }
  grid.innerHTML = cells;

  document.querySelectorAll('.track').forEach((row) => row.remove());
  tracks.forEach((track, i) => {
    const row = document.createElement('div');
    row.className = `track${track.short ? ' short' : ''}${track.clips || track.hits ? '' : ' empty'}`;
    row.innerHTML = `
      <div class="head">
        <div><h3 class="name">Track ${i + 1}</h3><div class="more"></div></div>
        <button class="led" aria-label="Mute track ${i + 1}"></button>
      </div>
      <div class="gutter"></div>
      <div class="lane"></div>`;
    const lane = row.querySelector('.lane');
    if (track.hits) lane.innerHTML = `<svg class="hits">${drawHits(track, bar)}</svg>`;
    (track.clips || []).forEach((clip) => addClip(lane, track, clip, bar));
    tracksEl.appendChild(row);
  });
  drawMap();
};

for (let b = 1; b < BARS; b += 4) {
  const label = document.createElement('span');
  label.textContent = b;
  ruler.appendChild(label);
}

Object.keys(notes).forEach((name) => {
  const current = name === 'FX PLUCK';
  const el = document.createElement('div');
  el.className = `pattern${current ? ' current' : ''}`;
  el.innerHTML = `
    <div class="pattern-name"><svg width="16" height="18"><use href="#keys"/></svg>${name}</div>
    <div class="pattern-notes"><svg viewBox="0 0 ${notes[name].length} 100" preserveAspectRatio="none">${noteRects(name, 0, 8)}</svg></div>
    ${current ? '<svg class="marker" width="14" height="26"><path d="M0 1L12 13L0 25Z"/></svg>' : ''}`;
  patterns.appendChild(el);
});

draw();
window.addEventListener('resize', draw);
```
